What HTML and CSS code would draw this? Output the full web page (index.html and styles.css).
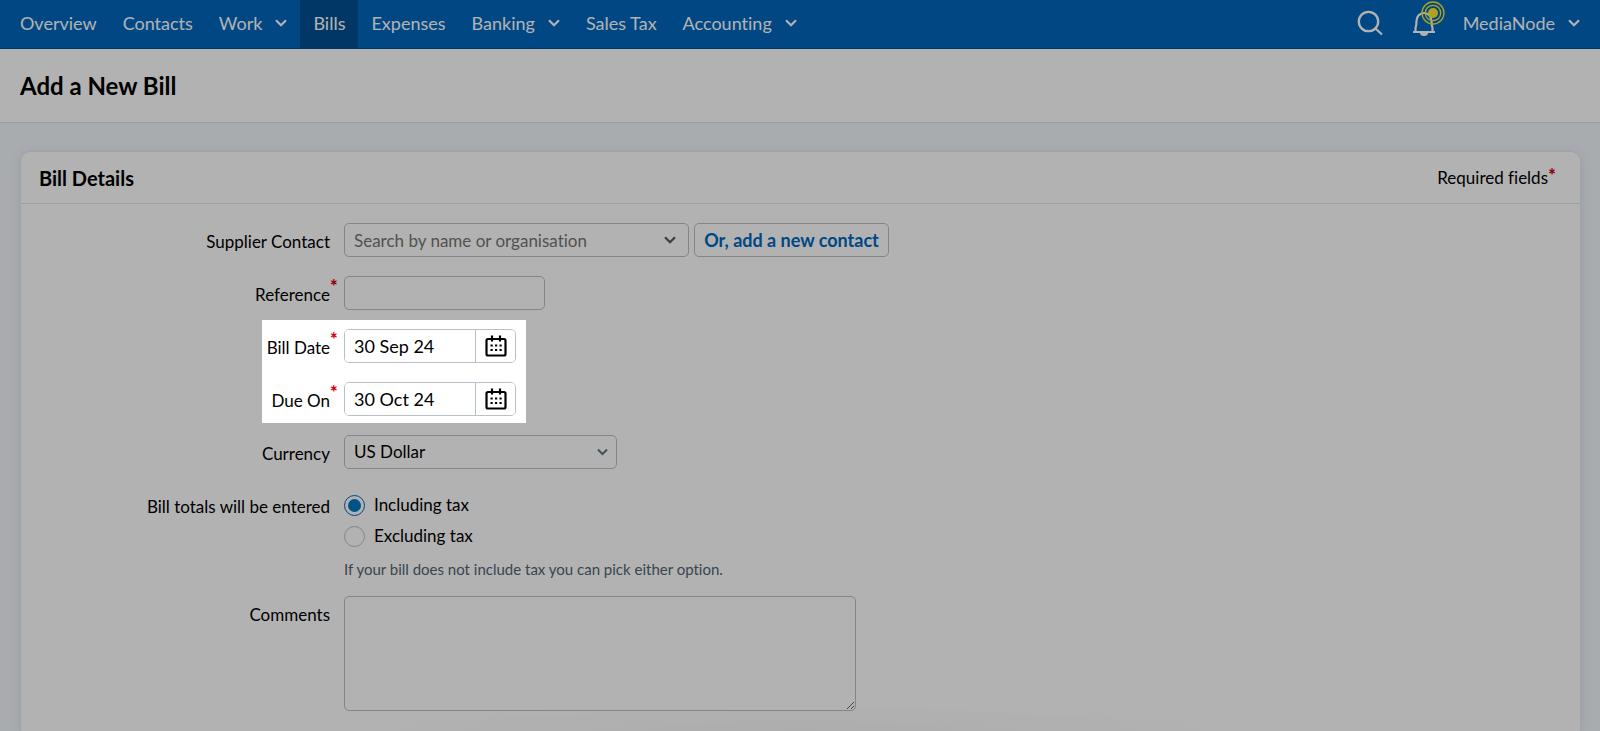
FILE: index.html
```html
<!DOCTYPE html>
<html lang="en">
<head>
<meta charset="utf-8">
<title>Add a New Bill</title>
<link rel="stylesheet" href="styles.css">
</head>
<body>
<svg class="sprite" aria-hidden="true">
  <symbol id="chevron" viewBox="0 0 12 8"><path d="M1 1.2 6 6.2 11 1.2" fill="none" stroke="currentColor" stroke-width="2.2"/></symbol>
  <symbol id="calendar" viewBox="0 0 22 22"><rect x="1.5" y="4" width="19" height="16.5" rx="1.5" fill="none" stroke="currentColor" stroke-width="2.2"/><path d="M7 .5v6M15 .5v6" stroke="currentColor" stroke-width="2.2"/><path d="M5.5 10.5h2.2M10 10.5h2.2M14.5 10.5h2.2M5.5 15h2.2M10 15h2.2M14.5 15h2.2" stroke="currentColor" stroke-width="2.2"/></symbol>
</svg>
<div class="page">
  <header class="topbar">
    <nav class="nav">
      <a class="nav-item" href="#">Overview</a>
      <a class="nav-item" href="#">Contacts</a>
      <a class="nav-item" href="#">Work <svg class="chevron"><use href="#chevron"/></svg></a>
      <a class="nav-item active" href="#">Bills</a>
      <a class="nav-item" href="#">Expenses</a>
      <a class="nav-item" href="#">Banking <svg class="chevron"><use href="#chevron"/></svg></a>
      <a class="nav-item" href="#">Sales Tax</a>
      <a class="nav-item" href="#">Accounting <svg class="chevron"><use href="#chevron"/></svg></a>
    </nav>
    <div class="tools">
      <button class="tool" type="button" aria-label="Search">
        <svg width="26" height="26" viewBox="0 0 26 26" fill="none" stroke="currentColor" stroke-width="2.3"><circle cx="11.5" cy="11.5" r="9.7"/><path d="m18.5 18.5 6.5 6"/></svg>
      </button>
      <button class="tool bell" type="button" aria-label="Notifications">
        <svg width="24" height="26" viewBox="0 0 24 26"><path d="M3.5 22V18Q4.5 15 4.5 11a7.5 8 0 0 1 15 0q0 4 1 7v4M1 22h22" fill="none" stroke="currentColor" stroke-width="2.2"/><path d="M8 23h8a4 3 0 0 1-8 0z" fill="currentColor"/></svg>
        <svg class="alert" width="24" height="24" viewBox="0 0 24 24" fill="none" stroke="#ffea2b"><circle cx="12" cy="12" r="11" stroke-width="1.3"/><circle cx="12" cy="12" r="7.7" stroke-width="1.3"/><circle cx="12" cy="12" r="5" fill="#ffea2b" stroke="none"/></svg>
      </button>
      <a class="nav-item" href="#">MediaNode <svg class="chevron"><use href="#chevron"/></svg></a>
    </div>
  </header>
  <div class="title-bar"><h1 class="title">Add a New Bill</h1></div>
  <main class="content">
    <section class="card">
      <div class="card-head">
        <h2 class="card-title">Bill Details</h2>
        <p class="required-note">Required fields<span class="star">*</span></p>
      </div>
      <form class="form">
        <div class="row">
          <label class="label" for="supplier">Supplier Contact</label>
          <div class="controls">
            <div class="picker picker-wide">
              <input class="field" id="supplier" type="text" placeholder="Search by name or organisation">
              <svg class="chevron"><use href="#chevron"/></svg>
            </div>
            <button class="add-button" type="button">Or, add a new contact</button>
          </div>
        </div>
        <div class="row">
          <label class="label" for="reference">Reference<span class="star">*</span></label>
          <input class="field field-short" id="reference" type="text">
        </div>
        <div class="dates">
          <div class="row">
            <label class="label" for="bill-date">Bill Date<span class="star">*</span></label>
            <div class="date">
              <input class="date-input" id="bill-date" type="text" value="30 Sep 24">
              <button class="date-button" type="button" aria-label="Choose bill date"><svg class="calendar"><use href="#calendar"/></svg></button>
            </div>
          </div>
          <div class="row">
            <label class="label" for="due-on">Due On<span class="star">*</span></label>
            <div class="date">
              <input class="date-input" id="due-on" type="text" value="30 Oct 24">
              <button class="date-button" type="button" aria-label="Choose due date"><svg class="calendar"><use href="#calendar"/></svg></button>
            </div>
          </div>
          <div class="spotlight"></div>
        </div>
        <div class="row">
          <label class="label" for="currency">Currency</label>
          <div class="picker picker-medium">
            <select class="field" id="currency"><option>US Dollar</option></select>
            <svg class="chevron small"><use href="#chevron"/></svg>
          </div>
        </div>
        <div class="row" role="radiogroup" aria-labelledby="totals">
          <span class="label" id="totals">Bill totals will be entered</span>
          <div class="options">
            <label class="option"><input class="radio" type="radio" name="tax" checked>Including tax</label>
            <label class="option"><input class="radio" type="radio" name="tax">Excluding tax</label>
            <p class="hint">If your bill does not include tax you can pick either option.</p>
          </div>
        </div>
        <div class="row">
          <label class="label" for="comments">Comments</label>
          <textarea class="field comments" id="comments"></textarea>
        </div>
      </form>
    </section>
  </main>
</div>
</body>
</html>
```
FILE: styles.css
```css
* { box-sizing: border-box; }
body { margin: 0; font: 17px/24px Lato, "Open Sans", sans-serif; font-variant-ligatures: none; color: #000; }
h1, h2, p { margin: 0; }
input, select, textarea, button { font: inherit; font-variant-ligatures: none; color: inherit; }
.sprite { position: absolute; width: 0; height: 0; }
.page { display: flex; flex-direction: column; height: 100vh; overflow: hidden; background: #f3f6fb; }

.topbar { display: flex; justify-content: space-between; height: 49px; padding: 0 7px; background: #0066be; border-bottom: 1px solid #00509c; flex: none; }
.nav, .tools { display: flex; }
.nav-item { display: flex; align-items: center; gap: 13px; padding: 0 13px 3px; color: #fff; font-size: 18px; text-decoration: none; }
.nav-item.active { background: #005093; }
.chevron { width: 12px; height: 8px; flex: none; }
.tool { position: relative; display: flex; align-items: center; padding: 0 0 3px; margin-right: 29px; border: 0; background: none; color: #fff; }
.bell { margin-right: 14px; }
.alert { position: absolute; left: 9px; top: 1px; }

.title-bar { display: flex; align-items: center; height: 74px; padding: 0 20px; background: #fff; border-bottom: 1px solid #dfe3e8; flex: none; }
.title { font-size: 24px; line-height: 32px; font-weight: 700; }
.content { display: flex; flex: 1; padding: 28px 19px 0 20px; }
.card { flex: 1; background: radial-gradient(ellipse 430px 26px at 50% 100%, #f8f8f8, #fff); border: 1px solid #e4e8ee; border-bottom: 0; border-radius: 10px 10px 0 0; box-shadow: 0 2px 14px rgba(60, 90, 150, .12); }
.card-head { display: flex; align-items: center; justify-content: space-between; height: 52px; padding: 0 24px 0 18px; border-bottom: 1px solid #dfe3e8; }
.card-title { font-size: 20px; line-height: 24px; font-weight: 700; }
.star { position: absolute; color: #d40012; font-size: 18px; font-weight: 900; line-height: 16px; }
.required-note { position: relative; padding-right: 8px; }
.required-note .star { right: 0; top: 1px; }

.form { display: flex; flex-direction: column; gap: 19px; padding: 19px 18px; }
.row { display: grid; grid-template-columns: 291px 1fr; column-gap: 14px; align-items: start; }
.label { position: relative; padding-top: 7px; text-align: right; }
.label .star { left: 100%; top: 2px; }
.controls { display: flex; gap: 5px; }
.field { display: block; width: 100%; height: 34px; margin: 0; padding: 0 9px; border: 1px solid #b8c1c9; border-radius: 5px; background: #fff; appearance: none; }
.field::placeholder { color: #757575; opacity: 1; }
.field-short { width: 201px; }
.picker { position: relative; }
.picker .chevron { position: absolute; right: 13px; top: 13px; color: #4a5a66; pointer-events: none; }
.picker .small { right: 9px; width: 11px; color: #66747f; }
.picker-wide { width: 345px; }
.picker-medium { width: 273px; }
.add-button { width: 195px; padding: 0; border: 1px solid #b8c1c9; border-radius: 5px; background: #fff; color: #0066be; font-size: 18px; font-weight: 700; }
.dates { position: relative; display: grid; gap: 19px; }
.date { display: flex; width: 172px; height: 34px; border: 1px solid #b8c1c9; border-radius: 5px; overflow: hidden; }
.date-input { flex: 1; min-width: 0; padding: 0 9px; border: 0; background: #fff; font-size: 18px; }
.date-button { display: flex; align-items: center; justify-content: center; width: 40px; padding: 0; border: 0; border-left: 1px solid #b8c1c9; background: #fff; }
.calendar { width: 22px; height: 22px; }
/* Dims everything but the date rows. */
.spotlight { position: absolute; z-index: 2; left: 223px; top: -9px; bottom: -7px; width: 264px; box-shadow: 0 0 0 2000px rgba(0, 0, 0, .3); pointer-events: none; }

.options { display: grid; gap: 7px; padding-top: 5px; }
.option { display: flex; align-items: center; gap: 9px; justify-self: start; }
.radio { display: grid; place-items: center; width: 21px; height: 21px; margin: 0; border: 1px solid #b8c1c9; border-radius: 50%; background: #fff; appearance: none; }
.radio:checked { border-color: #0066be; }
.radio:checked::before { content: ""; width: 13px; height: 13px; border-radius: 50%; background: #0078c4; }
.hint { margin-top: 6px; font-size: 15px; line-height: 16px; color: #526472; }
.comments { width: 512px; height: 115px; padding: 8px 10px; resize: both; }
```
